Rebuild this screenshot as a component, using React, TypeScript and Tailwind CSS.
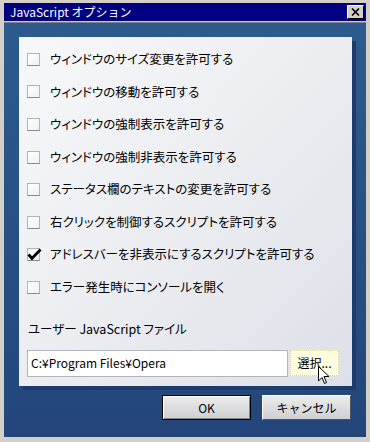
const font = { fontFamily: '"Noto Sans CJK JP", "Liberation Sans", sans-serif' };

const options = [
  { label: 'ウィンドウのサイズ変更を許可する', checked: false },
  { label: 'ウィンドウの移動を許可する', checked: false },
  { label: 'ウィンドウの強制表示を許可する', checked: false },
  { label: 'ウィンドウの強制非表示を許可する', checked: false },
  { label: 'ステータス欄のテキストの変更を許可する', checked: false },
  { label: '右クリックを制御するスクリプトを許可する', checked: false },
  { label: 'アドレスバーを非表示にするスクリプトを許可する', checked: true },
  { label: 'エラー発生時にコンソールを開く', checked: false },
];

function Check({ checked }: { checked: boolean }) {
  return (
    <div className="relative w-[13px] h-[13px] shrink-0 bg-gradient-to-br from-white to-[#eef0f4] border border-[#b4b4b4] border-b-dotted border-b-[#8a8a8a]">
      {checked && (
        <svg className="absolute -left-[1px] -top-[2px]" width="16" height="15" viewBox="0 0 16 15">
          <path d="M1.5 7.5 L5 11.5 L13.5 2.5" fill="none" stroke="#000" strokeWidth="2.8" />
        </svg>
      )}
    </div>
  );
}

export default function App() {
  return (
    <div style={font} className="w-[370px] h-[442px] bg-[#d4d0c8] px-[4px] pt-[3px] pb-[5px] flex flex-col text-black overflow-hidden">
      <div className="h-[18px] bg-[#000080] flex items-center justify-between pl-[6px] pr-[2px] shrink-0">
        <span className="text-white text-[12px] leading-none">JavaScript オプション</span>
        <div className="w-[17px] h-[14px] bg-[#d4d0c8] border border-t-white border-l-white border-r-black border-b-black flex items-center justify-center">
          <svg width="9" height="8" viewBox="0 0 9 8">
            <path d="M1 0.5 L8 7.5 M8 0.5 L1 7.5" stroke="#000" strokeWidth="1.6" />
          </svg>
        </div>
      </div>
      <div className="h-[1px] bg-[#808080] mt-[1px] shrink-0" />
      <div className="flex-1 bg-gradient-to-b from-[#2d5b8e] to-[#23457a] pt-[14px] px-[15px] flex flex-col">
        <div className="relative w-[333px] h-[349px] bg-gradient-to-br from-[#f7f8fa] via-[#ebedf1] to-[#dde0e8] shadow-[4px_4px_0_#1d3c6a] pt-[6px] pl-[8px] pr-[10px] flex flex-col">
          {options.map((o) => (
            <div key={o.label} className="h-[32.6px] flex items-center gap-[10px] shrink-0">
              <Check checked={o.checked} />
              <span className="text-[12.5px] [font-feature-settings:'palt']">{o.label}</span>
            </div>
          ))}
          <div className="mt-[16px] text-[12.5px] pl-[1px] [font-feature-settings:'palt']">ユーザー JavaScript ファイル</div>
          <div className="mt-[11px] flex gap-[2px]">
            <div className="w-[261px] h-[27px] bg-white border border-[#b0b4bc] flex items-center pl-[3px] text-[12px]">
              C:¥Program Files¥Opera
            </div>
            <div className="relative w-[49px] h-[26px] bg-[#ffffe0] border border-dotted border-[#d8d8a0] flex items-center justify-center text-[12px]">
              選択...
              <svg className="absolute left-[27px] top-[15px]" width="13" height="20" viewBox="0 0 13 20">
                <path d="M0.5 0.5 L0.5 15 L4 11.5 L6.5 17.5 L8.5 16.5 L6 10.5 L11 10.5 Z" fill="#fff" stroke="#000" strokeWidth="1" />
              </svg>
            </div>
          </div>
        </div>
        <div className="mt-[9px] flex justify-end gap-[11px]">
          <button className="w-[89px] h-[25px] bg-gradient-to-b from-[#ececec] to-[#cfcfd3] border border-black shadow-[inset_1px_1px_0_#fff,inset_-1px_-1px_0_#888] text-[12px]">
            OK
          </button>
          <button className="w-[89px] h-[25px] bg-gradient-to-b from-[#ececec] to-[#cfcfd3] border border-t-white border-l-white border-r-[#555] border-b-[#555] text-[12px]">
            キャンセル
          </button>
        </div>
      </div>
    </div>
  );
}
